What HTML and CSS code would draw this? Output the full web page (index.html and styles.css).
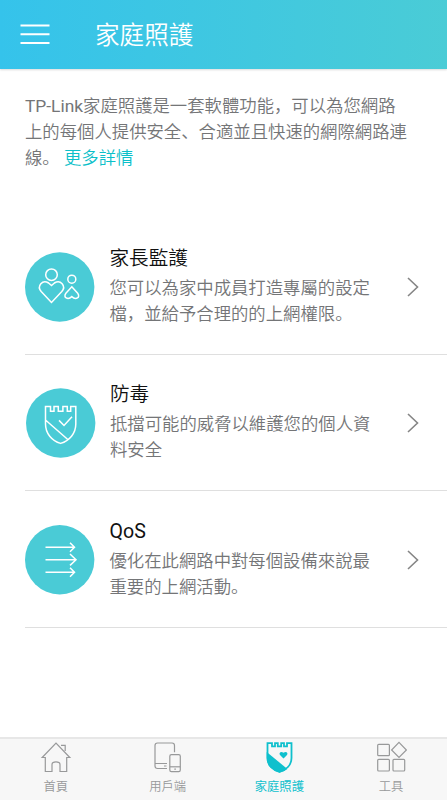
FILE: index.html
```html
<!DOCTYPE html>
<html lang="zh-Hans">
<head>
<meta charset="utf-8">
<meta name="viewport" content="width=device-width, initial-scale=1">
<title>家庭照護</title>
<link rel="stylesheet" href="styles.css">
</head>
<body>
<div class="app">
  <header class="topbar">
    <svg class="menu" viewBox="0 0 30 22" width="30" height="22"><path d="M0.5 1.5H29.5M0.5 10.2H29.5M0.5 19H29.5"/></svg>
    <h1>家庭照護</h1>
  </header>
  <main>
    <p class="intro"><span class="latin">TP-Link</span>家庭照護是一套軟體功能，可以為您網路<br>上的每個人提供安全、合適並且快速的網際網路連<br>線。 <a class="more">更多詳情</a></p>
    <ul class="features">
      <li class="feature">
        <svg class="badge" viewBox="0 0 70 70"><circle class="disc" cx="34.7" cy="35" r="34.7"/>
          <circle cx="26.5" cy="22.7" r="5.8"/>
          <path d="M26.5 50.4L16.2 39.6C11.5 34 17.5 27 23.6 31L26.5 33.5L29.4 31C35.5 27 41.5 34 36.8 39.6Z"/>
          <circle cx="46.8" cy="27.2" r="4"/>
          <path d="M46.8 34.8L52.7 41.2C55.8 45.5 50.8 48.4 46.8 44.6C42.8 48.4 37.8 45.5 40.9 41.2Z"/>
        </svg>
        <div class="copy"><h2>家長監護</h2><p>您可以為家中成員打造專屬的設定<br>檔，並給予合理的的上網權限。</p></div>
        <svg class="chevron" viewBox="0 0 12 20"><path d="M1 1L10.5 10L1 19"/></svg>
      </li>
      <li class="feature shield">
        <svg class="badge" viewBox="0 0 70 70"><circle class="disc" cx="34.7" cy="35" r="34.7"/>
          <path d="M19.5 18.6H24.5V23.2H28V18.6H32.3V23.2H36.9V18.6H41.3V23.2H44.7V18.6H49.8V36C49.8 45.5 43.5 52.5 34.6 55.4C25.7 52.5 19.5 45.5 19.5 36ZM19.5 32L41.5 51.2M33 32.4L38 37.5L46 28.8"/>
        </svg>
        <div class="copy"><h2>防毒</h2><p>抵擋可能的威脅以維護您的個人資<br>料安全</p></div>
        <svg class="chevron" viewBox="0 0 12 20"><path d="M1 1L10.5 10L1 19"/></svg>
      </li>
      <li class="feature">
        <svg class="badge" viewBox="0 0 70 70"><circle class="disc" cx="34.7" cy="34.7" r="34.7"/>
          <path d="M20.5 22.3H49.3M45 17.8L49.5 22.3L45 26.8M20.5 34.7H51M45 29L51 34.7L45 40.4M20.5 47.2H49.3M45 42.7L49.5 47.2L45 51.7"/>
        </svg>
        <div class="copy"><h2 class="latin">QoS</h2><p>優化在此網路中對每個設備來說最<br>重要的上網活動。</p></div>
        <svg class="chevron" viewBox="0 0 12 20"><path d="M1 1L10.5 10L1 19"/></svg>
      </li>
    </ul>
  </main>
  <nav class="tabs">
    <a class="tab">
      <svg viewBox="0 0 32 32"><path d="M5.3 16.5H2.2L16 2.2L29.8 16.5H26.7V30.5H20V23.5Q20 20.8 16 20.8Q12 20.8 12 23.5V30.5H5.3ZM21 4.4H25.2V10"/></svg>
      <span>首頁</span>
    </a>
    <a class="tab">
      <svg viewBox="0 0 32 32"><path d="M15 27.5H5.5Q3 27.5 3 25V4.5Q3 2 5.5 2H20Q22.5 2 22.5 4.5V11.3M3 22.5H15M12 25H14.5"/><rect x="17.8" y="13.6" width="10.5" height="17" rx="1.6"/><path d="M17.8 25.8H28.3"/><path d="M22.3 28.2H23.9"/></svg>
      <span>用戶端</span>
    </a>
    <a class="tab active">
      <svg viewBox="0 0 32 32"><path class="fill" d="M3.7 11L24.4 28Q20.5 31 16.5 31.6Q3.7 28 3.7 17Z"/><path d="M4.5 2.2H9V5.3H12V2.2H14.8V5.3H18.2V2.2H21V5.3H24V2.2H28.5V17C28.5 24.2 23 29 16.5 31C10 29 4.5 24.2 4.5 17Z"/><path class="fill" d="M20.5 17.5L17 13.9C15.5 12 18 9.5 20.5 11.8C23 9.5 25.5 12 24 13.9Z"/></svg>
      <span>家庭照護</span>
    </a>
    <a class="tab">
      <svg viewBox="0 0 32 32"><rect x="2.7" y="3.3" width="11.7" height="11.4" rx="1"/><rect x="2.7" y="18.3" width="11.7" height="11.7" rx="1"/><rect x="18" y="18.3" width="11.7" height="11.7" rx="1"/><path d="M24 1.4L31.4 9L24 16.5L16.6 9Z"/></svg>
      <span>工具</span>
    </a>
  </nav>
</div>
</body>
</html>
```
FILE: styles.css
```css
* { box-sizing: border-box; }
body, h1, h2, p, ul { margin: 0; padding: 0; }
body {
  background: #fff;
  font-family: Roboto, "Noto Sans CJK SC", sans-serif;
  font-weight: 350;
  color: #747577;
}
h1, h2 { font-weight: 350; }
svg { fill: none; flex: none; }
.app { height: 800px; display: flex; flex-direction: column; overflow: hidden; }
.topbar {
  height: 69px;
  flex: none;
  display: flex;
  align-items: center;
  padding: 0 0 0 20px;
  background: linear-gradient(90deg, #35c3eb, #4accd6);
  box-shadow: 0 1px 2px rgba(0, 0, 0, .15);
}
.menu { stroke: #fff; stroke-width: 1.9; }
.topbar h1 { margin: 2px 0 0 45px; font-size: 24.6px; line-height: 36px; color: #fff; }
main { flex: 1; }
.intro {
  padding: 24px 0 0 25px;
  font-size: 17.38px;
  line-height: 26px;
  white-space: nowrap;
}
.latin, .copy .latin { font-weight: 400; }
.more { color: #0bc0c9; }
.features { list-style: none; margin: 47px 0 0 25px; }
.feature {
  height: 136.6px;
  display: flex;
  align-items: flex-start;
  padding: 33.6px 28px 0 0;
  border-bottom: 1px solid #dfdfdf;
}
.badge { width: 70px; height: 70px; stroke: #fff; stroke-width: 1.5; }
.disc { fill: #4acbd6; stroke: none; }
.copy { flex: 1; margin: -8px 0 0 14.5px; white-space: nowrap; }
.shield .badge { margin-left: .5px; }
.copy h2 { font-size: 19.6px; line-height: 30px; color: #111; }
.copy p { font-size: 17.38px; line-height: 26px; padding-top: 1px; }
.chevron { width: 12px; height: 20px; margin-top: 25px; stroke: #858585; stroke-width: 1.6; }
.tabs {
  height: 63px;
  flex: none;
  display: grid;
  grid-template-columns: repeat(4, 1fr);
  background: #f7f7f7;
  border-top: 2px solid #e7e7e7;
}
.tab { display: flex; flex-direction: column; align-items: center; padding-top: 2px; color: #98999a; }
.tab svg { width: 32px; height: 32px; stroke: #98999a; stroke-width: 1.2; }
.tab span { font-size: 12.3px; line-height: 18px; margin-top: 5px; }
.active { color: #0fc0cd; font-weight: 400; }
.active svg { stroke: #0fc0cd; stroke-width: 1.8; }
.tab .fill { fill: #0fc0cd; stroke: none; }
```
